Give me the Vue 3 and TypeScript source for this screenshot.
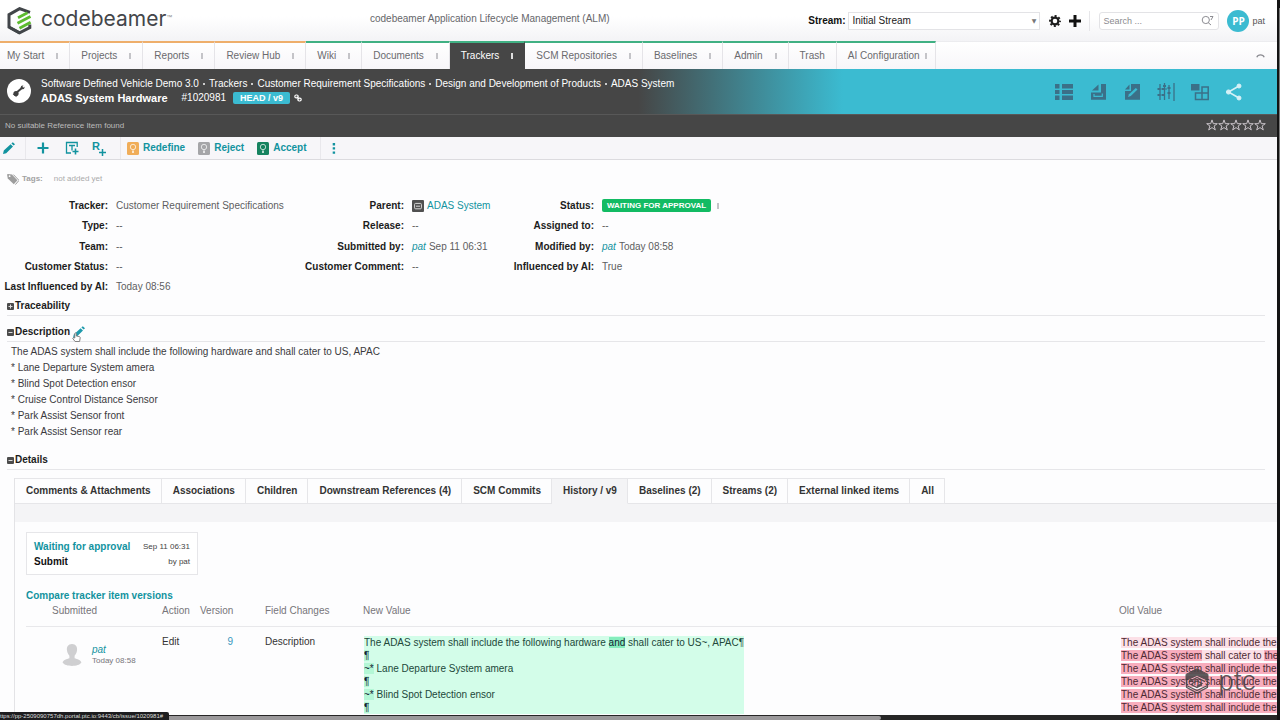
<script setup lang="ts">
import { ref } from 'vue'

interface NavItem { label: string; group: 'home' | 'project'; menu: boolean; active?: boolean }
interface Field { label: string; value: string; kind?: 'parent' | 'user' | 'status' }
interface Seg { text: string; mark?: boolean }

const nav: NavItem[] = [
  { label: 'My Start', group: 'home', menu: true },
  { label: 'Projects', group: 'home', menu: true },
  { label: 'Reports', group: 'home', menu: true },
  { label: 'Review Hub', group: 'home', menu: true },
  { label: 'Wiki', group: 'project', menu: true },
  { label: 'Documents', group: 'project', menu: true },
  { label: 'Trackers', group: 'project', menu: true, active: true },
  { label: 'SCM Repositories', group: 'project', menu: true },
  { label: 'Baselines', group: 'project', menu: true },
  { label: 'Admin', group: 'project', menu: true },
  { label: 'Trash', group: 'project', menu: false },
  { label: 'AI Configuration', group: 'project', menu: true },
]

const crumbs = [
  'Software Defined Vehicle Demo 3.0',
  'Trackers',
  'Customer Requirement Specifications',
  'Design and Development of Products',
  'ADAS System',
]

const transitions = [
  { label: 'Redefine', tone: 'amber' },
  { label: 'Reject', tone: 'grey' },
  { label: 'Accept', tone: 'green' },
]

const fields: Field[] = [
  { label: 'Tracker', value: 'Customer Requirement Specifications' },
  { label: 'Parent', value: 'ADAS System', kind: 'parent' },
  { label: 'Status', value: 'WAITING FOR APPROVAL', kind: 'status' },
  { label: 'Type', value: '--' },
  { label: 'Release', value: '--' },
  { label: 'Assigned to', value: '--' },
  { label: 'Team', value: '--' },
  { label: 'Submitted by', value: 'Sep 11 06:31', kind: 'user' },
  { label: 'Modified by', value: 'Today 08:58', kind: 'user' },
  { label: 'Customer Status', value: '--' },
  { label: 'Customer Comment', value: '--' },
  { label: 'Influenced by AI', value: 'True' },
  { label: 'Last Influenced by AI', value: 'Today 08:56' },
]

const description = [
  'The ADAS system shall include the following hardware and shall cater to US, APAC',
  '* Lane Departure System amera',
  '* Blind Spot Detection ensor',
  '* Cruise Control Distance Sensor',
  '* Park Assist Sensor front',
  '* Park Assist Sensor rear',
]

const tabs = [
  'Comments & Attachments', 'Associations', 'Children', 'Downstream References (4)', 'SCM Commits',
  'History / v9', 'Baselines (2)', 'Streams (2)', 'External linked items', 'All',
]
const activeTab = ref('History / v9')
const stream = ref('Initial Stream')
const search = ref('')

const newValue: Seg[][] = [
  [
    { text: 'The ADAS system shall include the following hardware ' },
    { text: 'and', mark: true },
    { text: ' shall cater to US~, APAC¶' },
  ],
  [{ text: '¶', mark: true }],
  [{ text: '~*', mark: true }, { text: ' Lane Departure System amera' }],
  [{ text: '¶', mark: true }],
  [{ text: '~*', mark: true }, { text: ' Blind Spot Detection ensor' }],
  [{ text: '¶', mark: true }],
]

const oldValue: Seg[][] = [
  [{ text: 'The ADAS system shall include the' }],
  [{ text: 'The ADAS system', mark: true }, { text: ' shall cater to ' }, { text: 'the', mark: true }],
  [{ text: 'The ADAS system shall include the', mark: true }],
  [{ text: 'The ADAS system shall include the', mark: true }],
  [{ text: 'The ADAS system shall include the', mark: true }],
  [{ text: 'The ADAS system shall include the', mark: true }],
]
</script>

<template>
  <div class="frame">
    <div class="page">
      <header class="top">
        <a class="brand" href="#">
          <svg width="26" height="28" viewBox="0 0 26 28" fill="none">
            <path d="M23 5.400 12.600 1.600 2 7.600v12.600L12.600 26" stroke="#414549" stroke-width="3" />
            <path d="M2.400 20.200 12.600 25.800 22.800 20.600v-3" stroke="#414549" stroke-width="3" />
            <path d="M11 10.800 20.500 5.800M10.500 16.300 23.500 9.400M12.500 21.200l11.100-6" stroke="#5dbb2f" stroke-width="2.800" />
          </svg>
          <span class="word">codebeamer</span><span class="tm">™</span>
        </a>
        <span class="product">codebeamer Application Lifecycle Management (ALM)</span>
        <div class="tools">
          <label for="stream">Stream:</label>
          <span class="select">
            <select id="stream" v-model="stream"><option>Initial Stream</option></select>
            <span class="arrow">▼</span>
          </span>
          <button aria-label="Settings">
            <svg width="12" height="12" viewBox="0 0 12 12">
              <circle cx="6" cy="6" r="3.400" fill="none" stroke="#1d1d1d" stroke-width="2.200" />
              <circle cx="6" cy="6" r="5" fill="none" stroke="#1d1d1d" stroke-width="1.900" stroke-dasharray="2 1.927" stroke-dashoffset="1" />
            </svg>
          </button>
          <button aria-label="Add">
            <svg width="12" height="12" viewBox="0 0 12 12"><path d="M6 0v12M0 6h12" stroke="#111" stroke-width="3" /></svg>
          </button>
          <span class="rule"></span>
          <span class="search">
            <input v-model="search" type="text" placeholder="Search ..." aria-label="Search" />
            <svg width="13" height="11" viewBox="0 0 13 11" fill="none" stroke="#8c8c92">
              <circle cx="4.800" cy="5" r="3.600" /><path d="M7.200 7.600 10 10M9 1.500h3L10 5" />
            </svg>
          </span>
          <span class="avatar">PP</span>
          <a class="me" href="#">pat</a>
        </div>
      </header>

      <nav class="nav">
        <a v-for="n in nav" :key="n.label" href="#" class="item" :class="[n.group, { active: n.active, tight: n.label === 'AI Configuration' }]">
          {{ n.label }}<span v-if="n.menu" class="dots"></span>
        </a>
        <button class="fold" aria-label="Collapse">
          <svg width="9" height="5" viewBox="0 0 9 5"><path d="M.8 4.200C2 1 7 1 8.200 4.200" fill="none" stroke="#8a8a90" stroke-width="1.200" /></svg>
        </button>
      </nav>

      <section class="banner">
        <svg class="badge" width="24" height="24" viewBox="0 0 24 24">
          <circle cx="12" cy="12" r="12" fill="#fff" />
          <path d="M8.500 14.500 15.500 8.500" stroke="#3f3f3f" stroke-width="2" />
          <circle cx="9" cy="14.600" r="2.600" fill="#3f3f3f" /><circle cx="15.600" cy="8.400" r="1.900" fill="#3f3f3f" />
          <path d="M5.600 15 9 14.600l.6 3.600" fill="#3f3f3f" /><path d="M15.800 8.200 18.600 5.600" stroke="#fff" stroke-width="1.200" />
        </svg>
        <div class="heads">
          <div class="crumbs">
            <template v-for="(c, i) in crumbs" :key="c">
              <span v-if="i" class="sep"></span><a href="#">{{ c }}</a>
            </template>
          </div>
          <div class="title">
            <h1>ADAS System Hardware</h1>
            <span>#1020981</span>
            <span class="head">HEAD / v9</span>
            <svg width="8" height="8" viewBox="0 0 8 8" fill="none" stroke="#fff" stroke-width="1.200">
              <rect x=".8" y="1" width="3.400" height="2.800" rx="1.400" /><rect x="3.800" y="4.200" width="3.400" height="2.800" rx="1.400" /><path d="M2.800 2.600 5.200 5.400" />
            </svg>
          </div>
        </div>
        <div class="views">
          <button aria-label="Table view">
            <svg width="20" height="20" viewBox="0 0 20 20" fill="#3b7088">
              <path d="M1 2h4.500v4.500H1zM8 2h11v4.500H8zM1 8h4.500v4H1zM8 8h11v4H8zM1 13.500h4.500V18H1zM8 13.500h11V18H8z" />
            </svg>
          </button>
          <button aria-label="Document view">
            <svg width="20" height="20" viewBox="0 0 20 20" fill="#3b7088">
              <path d="M13 2h5v15.800H3V10.500h10z" /><path d="M10.500 2.500V8.500H4z" />
              <path d="M6 12v2.300h8.300V11.500" fill="none" stroke="#3bbbd1" stroke-width="1.200" />
            </svg>
          </button>
          <button aria-label="Document edit view">
            <svg width="20" height="20" viewBox="0 0 20 20" fill="#3b7088">
              <path d="M9 2h9v15.800H3V9h6z" /><path d="M7.500 2.500v5H3z" />
              <path d="M6 15 7 12.200 13.800 6 15.500 7.600 8.800 14z" fill="#3bbbd1" />
            </svg>
          </button>
          <button aria-label="Planner">
            <svg width="20" height="20" viewBox="0 0 20 20" fill="none" stroke="#3b7088" stroke-width="1.300">
              <path d="M4 2v16M8.500 1v17M13 3v14M18 1v18" /><path d="M1.500 7h9M1.500 13h7M11.500 6h4" stroke-dasharray="3 1" stroke-width="1.800" />
              <path d="M7 4h3M11.500 11h3" stroke-width="2" />
            </svg>
          </button>
          <button aria-label="Board">
            <svg width="20" height="20" viewBox="0 0 20 20" fill="none" stroke="#3b7088" stroke-width="1.500">
              <path d="M1 2h8.500v6.500H1z" fill="#3b7088" stroke="none" /><path d="M12 5h6.200v12.500H5.500V11H12zM12 5v12.500M12 11h6" />
            </svg>
          </button>
          <button aria-label="Share">
            <svg width="20" height="20" viewBox="0 0 20 20" fill="#d5f1f7" stroke="#d5f1f7">
              <path d="M15 4 4.500 10 15 16" fill="none" stroke-width="1.600" />
              <circle cx="15" cy="4" r="2" /><circle cx="4.500" cy="10" r="2.100" /><circle cx="15" cy="16" r="2" />
            </svg>
          </button>
        </div>
      </section>

      <div class="refbar">
        <span>No suitable Reference Item found</span>
        <span class="stars">
          <svg v-for="s in 5" :key="s" width="12" height="12" viewBox="0 0 12 12">
            <path d="M6 .9 7.300 4.700h4L8.100 7l1.200 3.900L6 8.600l-3.300 2.300L3.900 7 .7 4.700h4z" fill="none" stroke="#c9c3c9" />
          </svg>
        </span>
      </div>

      <div class="toolbar">
        <button class="pen" aria-label="Edit">
          <svg width="12" height="12" viewBox="0 0 12 12" fill="#12939f"><path d="M0 12 .8 8.600 7.600 2.200 10 4.400 3.200 11.200zM8.400 1.500 9.800.2 12 2.200 10.700 3.600z" /></svg>
        </button>
        <span class="rule"></span>
        <button aria-label="Add child">
          <svg width="12" height="12" viewBox="0 0 12 12"><path d="M6 .5v11M.5 6h11" stroke="#12939f" stroke-width="2.200" /></svg>
        </button>
        <button class="filter" aria-label="New from template">
          <svg width="14" height="14" viewBox="0 0 14 14" fill="none" stroke="#12939f" stroke-width="1.300">
            <path d="M6 12H1.500V1.500h10.700V6M4 4.500h6M7 4.500v5" /><path d="M10.500 7.500v6M7.500 10.500h6" stroke-width="1.600" />
          </svg>
        </button>
        <button class="rplus" aria-label="Add reference">
          <b>R</b>
          <svg width="7" height="7" viewBox="0 0 7 7"><path d="M3.500 0v7M0 3.500h7" stroke="#12939f" stroke-width="1.500" /></svg>
        </button>
        <span class="rule"></span>
        <button v-for="t in transitions" :key="t.label" class="act">
          <svg width="12" height="13" viewBox="0 0 12 13" :class="t.tone">
            <rect width="12" height="13" rx="1.500" />
            <circle cx="6" cy="5" r="2.700" fill="none" stroke="#fff" stroke-opacity=".7" /><path d="M5 8.500h2v2.400H5z" fill="#fff" fill-opacity=".7" />
          </svg>{{ t.label }}
        </button>
        <span class="rule"></span>
        <button aria-label="More">
          <svg width="4" height="11" viewBox="0 0 4 11" fill="#12939f"><path d="M.7 0h2.400v2.400H.7zM.7 4.200h2.400v2.400H.7zM.7 8.400h2.400v2.400H.7z" /></svg>
        </button>
      </div>

      <div class="tags">
        <svg width="12" height="12" viewBox="0 0 12 12" fill="#9d9d9d"><path d="M0 1.500 1 1l4 .6 5.400 5.600-3.600 4L.8 5.400z" /><path d="M6.400 1.600 12 7.400 8.400 11.600" fill="none" stroke="#9d9d9d" /><circle cx="2.600" cy="3.200" r=".9" fill="#fff" /></svg>
        <b>Tags:</b><span>not added yet</span>
      </div>

      <dl class="fields">
        <template v-for="f in fields" :key="f.label">
          <dt>{{ f.label }}:</dt>
          <dd>
            <template v-if="f.kind === 'parent'">
              <svg width="12" height="12" viewBox="0 0 12 12"><rect width="12" height="12" rx="1" fill="#505050" /><rect x="2.600" y="3.400" width="6.800" height="5.400" rx="1" fill="none" stroke="#d8d8d8" /><path d="M4 6.200h4" stroke="#d8d8d8" /></svg>
              <a href="#">{{ f.value }}</a>
            </template>
            <template v-else-if="f.kind === 'user'"><a class="user" href="#">pat</a>{{ f.value }}</template>
            <template v-else-if="f.kind === 'status'"><span class="status">{{ f.value }}</span><span class="dots"></span></template>
            <template v-else>{{ f.value }}</template>
          </dd>
        </template>
      </dl>

      <h2 class="section"><button aria-label="Expand Traceability"><svg width="7" height="7" viewBox="0 0 7 7"><rect width="7" height="7" rx="1" fill="#4c4c4c" /><path d="M1.500 3.500h4M3.500 1.500v4" stroke="#ddd" /></svg></button>Traceability</h2>
      <h2 class="section second">
        <button aria-label="Collapse Description"><svg width="7" height="7" viewBox="0 0 7 7"><rect width="7" height="7" rx="1" fill="#4c4c4c" /><path d="M1.500 3.500h4" stroke="#ddd" /></svg></button>Description
        <button class="editdesc" aria-label="Edit description">
          <svg width="12" height="12" viewBox="0 0 12 12" fill="#1e9aac"><path d="M0 12 .8 8.600 7.600 2.200 10 4.400 3.200 11.200zM8.400 1.500 9.800.2 12 2.200 10.700 3.600z" /></svg>
          <svg class="hand" width="9" height="11" viewBox="0 0 9 11"><path d="M2.800 6V1.400q.8-1 1.500 0V4l3.200.6q.8.3.7 1.200L7.600 9.500H3.100L.7 6.400q.3-1 1.200-.6z" fill="#fff" stroke="#777" stroke-width=".9" /></svg>
        </button>
      </h2>
      <div class="desc"><p v-for="d in description" :key="d">{{ d }}</p></div>
      <h2 class="section third"><button aria-label="Collapse Details"><svg width="7" height="7" viewBox="0 0 7 7"><rect width="7" height="7" rx="1" fill="#4c4c4c" /><path d="M1.500 3.500h4" stroke="#ddd" /></svg></button>Details</h2>

      <section class="details">
        <div class="tabs" role="tablist">
          <button v-for="t in tabs" :key="t" role="tab" :aria-selected="t === activeTab" :class="{ on: t === activeTab }" @click="activeTab = t">{{ t }}</button>
        </div>
        <div class="band"></div>
        <div class="panel">
          <div class="card">
            <a href="#">Waiting for approval</a><span>Sep 11 06:31</span>
            <b>Submit</b><span>by pat</span>
          </div>
          <a class="compare" href="#">Compare tracker item versions</a>
          <table>
            <colgroup><col class="c1" /><col class="c2" /><col class="c3" /><col class="c4" /><col /><col class="c6" /></colgroup>
            <thead>
              <tr><th class="sub">Submitted</th><th>Action</th><th>Version</th><th>Field Changes</th><th>New Value</th><th>Old Value</th></tr>
            </thead>
            <tbody>
              <tr>
                <td>
                  <div class="who">
                    <svg width="20" height="22" viewBox="0 0 20 22" fill="#cfcfd1"><path d="M10 0c4 0 5.600 3 5 6.600-.3 2.400-1.400 4-2.400 5.200v2.400c2.600 1 6.400 1.600 6.800 4.400C18 21 14 22 10 22S2 21 .6 18.600C1 15.800 4.800 15.200 7.400 14.200v-2.400C6.400 10.600 5.300 9 5 6.600 4.400 3 6 0 10 0z" /></svg>
                    <div><a class="user" href="#">pat</a><span>Today 08:58</span></div>
                  </div>
                </td>
                <td>Edit</td>
                <td class="ver"><a href="#">9</a></td>
                <td>Description</td>
                <td><div class="diff new"><div v-for="(l, i) in newValue" :key="i"><span v-for="(s, j) in l" :key="j" :class="{ mark: s.mark, strong: s.text === 'and' }">{{ s.text }}</span></div></div></td>
                <td><div class="diff old"><div v-for="(l, i) in oldValue" :key="i"><span v-for="(s, j) in l" :key="j" :class="{ mark: s.mark }">{{ s.text }}</span></div></div></td>
              </tr>
            </tbody>
          </table>
        </div>
      </section>
    </div>

    <div class="vbar"><span></span></div>
    <div class="hbar"><span></span></div>
    <div class="hint">ttps://pp-2509090757dh.portal.ptc.io:9443/cb/issue/1020981#</div>
    <div class="ptc">
      <svg width="24" height="26" viewBox="0 0 24 26" fill="none" stroke="#484446">
        <path d="M12 .8 23 6.400v6L12 7.400 1 12.400v-6z" fill="#484446" />
        <path d="M1.500 12.400v7L12 25l10.500-5.600v-7" stroke-width="1.200" />
        <path d="M4 13.600 12 9.500l8 4.100M7 15.500l5-2.600 5 2.600-5 2.600M1.500 17.500 12 22.500l10.500-5M7 15.500v1.500l5 2.600 5-2.600" stroke-width="1.300" />
      </svg>
      <span>ptc</span>
    </div>
  </div>
</template>

<style>
body { margin: 0; background: #fff; }
</style>

<style scoped>
.frame {
  position: relative;
  display: grid;
  grid-template: minmax(0, 1fr) 5px / minmax(0, 1fr) 3px;
  height: 100vh;
  overflow: hidden;
  font: 10px/14px "Liberation Sans", Arial, sans-serif;
  color: #333;
  background: #fdfdfe;
}
.frame * { box-sizing: border-box; }
.page { overflow: hidden; min-width: 0; }
a { color: #12939f; text-decoration: none; }
button { border: 0; padding: 0; margin: 0; background: none; font: inherit; color: inherit; display: inline-flex; align-items: center; }
svg { flex: none; display: block; }

.top { display: flex; align-items: center; height: 41px; background: linear-gradient(#fff 40%, #f3f3f6); }
.brand { display: flex; align-items: center; flex: 0 0 370px; height: 36px; padding-left: 7px; color: #44464a; }
.word { margin-left: 8px; font: 21px/24px Inter, Lato, sans-serif; height: 28px; }
.tm { align-self: flex-start; margin-top: 7px; font-size: 6px; color: #888; }
.product { color: #66666a; padding-bottom: 3px; }
.tools { display: flex; align-items: center; margin-left: auto; padding-right: 12px; color: #222; }
.tools label { font-weight: bold; color: #111; margin-right: 3px; }
.select { position: relative; width: 192px; margin-right: 9px; }
.select select { appearance: none; display: block; width: 100%; height: 18px; padding: 0 3px; border: 1px solid #e3e3e6; border-radius: 0; background: #fff; font: inherit; color: #222; }
.arrow { position: absolute; right: 4px; top: 3px; font: 6px/12px "DejaVu Sans", sans-serif; color: #777; pointer-events: none; }
.tools button { margin-right: 8px; }
.tools .rule { height: 20px; border-left: 1px solid #e6e6e9; margin-right: 9px; }
.search { display: flex; align-items: center; width: 120px; height: 18px; padding: 0 4px 0 3px; border: 1px solid #e3e3e6; border-radius: 3px; background: #fff; margin-right: 8px; }
.search input { flex: 1; min-width: 0; border: 0; padding: 0; outline: 0; background: none; font: 9px/14px "Liberation Sans", Arial, sans-serif; }
.search input::placeholder { color: #8b8b8f; }
.avatar { width: 22px; height: 22px; border-radius: 50%; background: #3bbbd1; color: #fff; font: bold 10px/22px "Open Sans", sans-serif; text-align: center; margin-right: 3px; }
.me { color: #555; font-size: 9px; }

.nav { display: flex; height: 28px; background: linear-gradient(#fff, #f7f6f9); border-top: 1px solid #ececef; }
.item { display: flex; align-items: center; margin-top: -1px; padding: 0 11px 1px; border-top: 2px solid #40b083; border-right: 1px solid #e5e4e8; color: #6a6a6e; white-space: nowrap; }
.item.home { border-top-color: #eeae6b; }
.item:first-child { padding-left: 7px; }
.item.active { background: #464646; color: #fff; border-right-color: #464646; }
.dots { width: 2px; height: 6px; margin-left: 12px; background: #c4c4c8; }
.tight { padding-right: 8px; }
.tight .dots { margin-left: 5px; }
.active .dots { background: #ddd; }
.fold { margin-left: auto; margin-right: 12px; }

.banner { display: flex; height: 45px; padding-left: 7px; color: #fff; background: linear-gradient(90deg, #464646 50%, #3bbbd1 66%); }
.banner a { color: #fff; }
.badge { margin: 10px 10px 0 0; }
.heads { padding-top: 8px; }
.crumbs, .title { display: flex; align-items: center; height: 14px; white-space: nowrap; }
.sep { width: 2px; height: 2px; margin: 0 4px; background: #ccc; }
.title h1 { margin: 0 14px 0 0; font-size: 11px; line-height: 14px; }
.head { margin: 0 4px 0 7px; padding: 0 7px; border-radius: 2px; background: #3bbbd1; font: bold 9px/12px "Liberation Sans", Arial, sans-serif; }
.views { display: flex; align-items: center; gap: 14px; margin-left: auto; padding-right: 33px; }

.refbar { display: flex; align-items: center; justify-content: space-between; height: 23px; padding: 0 11px 0 5px; border-top: 1px solid #585858; background: #464646; color: #bbb; font-size: 8px; }
.stars { display: flex; padding-bottom: 2px; }

.toolbar { display: flex; align-items: center; height: 23px; background: #f7f6f9; border-bottom: 1px solid #dcdbdf; color: #12939f; font-weight: bold; line-height: 16px; }
.toolbar .pen { margin: 0 10px 0 3px; }
.toolbar .rule { height: 22px; border-left: 1px solid #e9e8ec; margin-right: 11px; }
.filter { margin: 0 13px 0 16px; }
.rplus { margin-right: 14px; height: 16px; }
.rplus b { align-self: flex-start; font: bold 11px/13px "Liberation Sans", Arial, sans-serif; }
.rplus svg { align-self: flex-end; margin-left: -1px; }
.toolbar .rplus + .rule { margin-right: 6px; }
.act { gap: 4px; margin-right: 13px; }
.amber { fill: #f0ad59; }
.grey { fill: #a5a5a8; }
.green { fill: #16835f; }

.tags { display: flex; align-items: center; height: 36px; padding: 2px 0 0 7px; color: #aaa; font-size: 8px; }
.tags b { margin: 0 11px 0 3px; color: #a2a2a2; }

.fields { display: grid; grid-template-columns: 101px 182px 98px 94px 80px 1fr; grid-template-rows: 19px 22px repeat(3, 20px); align-items: center; gap: 0 8px; margin: 0; padding-left: 7px; }
.fields dt { text-align: right; font-weight: bold; color: #1c1c1c; white-space: nowrap; justify-self: end; }
.fields dd { display: flex; align-items: center; margin: 0; color: #5d5d61; white-space: nowrap; }
.fields dd svg { margin-right: 3px; }
.user { font-style: italic; margin-right: 3px; }
.status { padding: 0 5px; border-radius: 2px; background: #12bb63; color: #fff; font: bold 8px/13px "Liberation Sans", Arial, sans-serif; }
.fields .dots { margin-left: 6px; }

.section { display: flex; align-items: center; height: 19px; margin: 0 12px 0 7px; border-bottom: 1px solid #e6e6e9; font-size: 10px; line-height: 18px; color: #1c1c1c; }
.section > button:first-child { margin-right: 1px; }
.second { margin-top: 7px; }
.editdesc { position: relative; margin-left: 3px; }
.hand { position: absolute; left: -1px; top: 6px; }
.desc { padding: 2px 0 0 11px; }
.desc p { margin: 0; line-height: 16px; color: #3a3a3d; }
.third { margin-top: 11px; }

.details { margin: 8px 0 0 14px; border-left: 1px solid #e3e3e6; }
.tabs { display: flex; box-shadow: inset 0 -1px #e3e3e6; }
.tabs button { height: 26px; padding: 0 10px 0 11px; border: solid #e6e6e9; border-width: 1px 1px 1px 0; background: #fdfdfe; font-weight: bold; color: #333; white-space: nowrap; }
.tabs .on { background: #f4f4f6; border-bottom-color: #f4f4f6; }
.band { height: 18px; background: #f4f4f6; }
.panel { padding: 10px 0 0 11px; }
.card { display: grid; grid-template-columns: 1fr auto; align-content: center; width: 172px; height: 43px; padding: 0 7px; border: 1px solid #e6e6e9; background: #fff; line-height: 15px; font-weight: bold; color: #111; }
.card span { font-size: 8px; font-weight: normal; text-align: right; color: #444; }
.compare { display: block; margin-top: 14px; font-weight: bold; }
table { width: 100%; table-layout: fixed; border-collapse: collapse; }
.c1 { width: 136px; } .c2 { width: 38px; } .c3 { width: 65px; } .c4 { width: 98px; } .c6 { width: 158px; }
th { height: 23px; padding: 0 0 6px; border-bottom: 1px solid #e8e8eb; font-weight: normal; text-align: left; color: #77757a; white-space: nowrap; line-height: 14px; }
td { padding: 8px 0 0; vertical-align: top; white-space: nowrap; color: #333; }
th.sub { padding-left: 26px; }
.who { display: flex; align-items: center; gap: 10px; padding: 9px 0 0 36px; line-height: 11px; }
.who span { display: block; font-size: 8px; color: #77757a; }
.ver { text-align: right; padding-right: 32px; }
.ver a { color: #3a98bd; }
.diff { line-height: 13px; margin: 1px 0 0 1px; white-space: pre; overflow: hidden; }
.diff > div { height: 13px; }
.new { display: inline-block; background: #d3fde9; color: #21483a; }
.new .mark { background: #b4f7d6; color: #123; }
.new .strong { background: #86edbd; }
.old { margin-left: 2px; color: #4d2a33; }
.old span { background: #fce0e7; }
.old .mark { background: #f8adbd; }

.vbar { grid-row: 1 / 3; grid-column: 2; background: #141414; }
.vbar span { display: block; width: 1px; height: 222px; margin: 8px 0 0 2px; background: #7a7a7a; }
.hbar { grid-row: 2; grid-column: 1; padding-top: 1px; background: #262626; }
.hbar span { display: block; width: 69%; height: 4px; background: #9b999b; border-radius: 0 2px 2px 0; }
.hint { position: absolute; left: 0; bottom: 0; height: 8px; padding-right: 6px; border-top-right-radius: 2px; background: #1d1d1f; color: #ddd; font-size: 6px; line-height: 9px; white-space: nowrap; }
.ptc { position: absolute; right: 24px; bottom: 22px; display: flex; align-items: center; gap: 9px; color: #484446; opacity: .88; }
.ptc span { font: 300 26px/34px Inter, Lato, sans-serif; }
</style>
